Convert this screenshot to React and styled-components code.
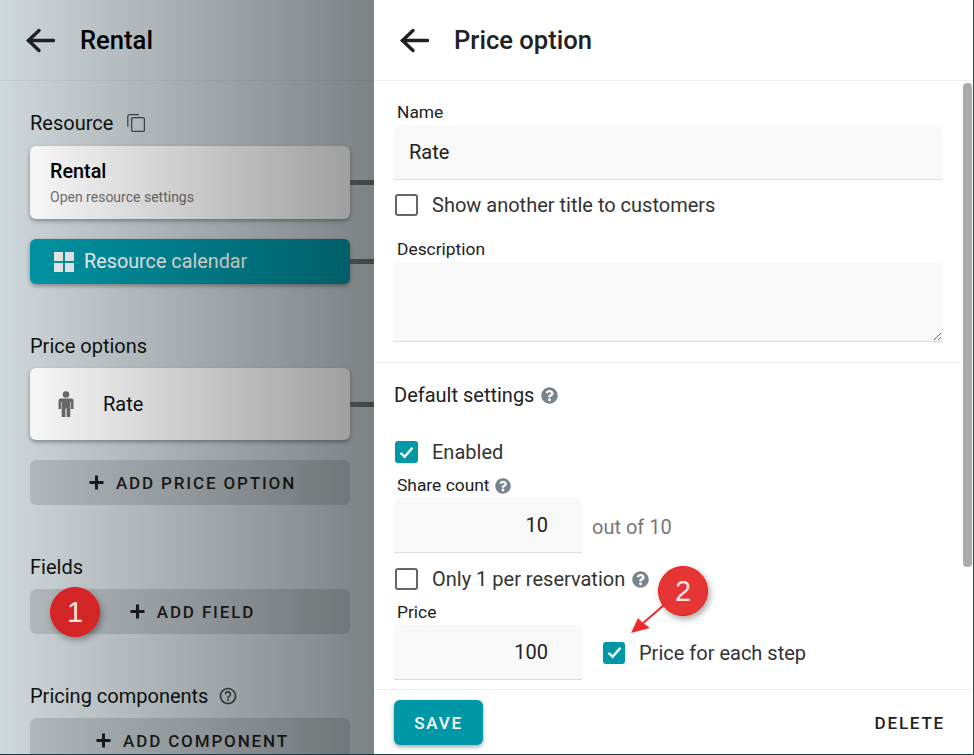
import React from 'react';
import styled, { createGlobalStyle } from 'styled-components';
import { FaQuestionCircle } from 'react-icons/fa';
import { MdHelpOutline } from 'react-icons/md';

const Global = createGlobalStyle`
  html, body {
    margin: 0;
    padding: 0;
    height: 755px;
    overflow: hidden;
    background: #fff;
    font-family: Roboto, "Liberation Sans", sans-serif;
  }
  * { box-sizing: border-box; }
`;

const Frame = styled.div`
  display: flex;
  width: 974px;
  height: 755px;
  position: relative;
  overflow: hidden;
  border-right: 1px solid #37474a;
  border-bottom: 1px solid #1f3a3d;
`;

/* ---------- left panel ---------- */

const LeftPanel = styled.div`
  position: relative;
  width: 374px;
  flex: none;
  height: 100%;
  overflow: hidden;
  background: #cfd8dc;
  color: #000;
`;

const Shade = styled.div`
  position: absolute;
  inset: 0;
  pointer-events: none;
  background: linear-gradient(to right, rgba(0, 0, 0, 0) 0%, rgba(0, 0, 0, 0.4) 100%);
`;

const Header = styled.div`
  display: flex;
  align-items: center;
  height: 81px;
  flex: none;
  padding-left: ${(p) => p.$pad}px;
  border-bottom: 1px solid ${(p) => p.$line};
`;

const BackIcon = styled.svg`
  width: 29px;
  height: 25px;
  flex: none;
  margin-right: ${(p) => p.$gap}px;
`;

const Title = styled.div`
  font-size: 25.6px;
  font-weight: ${(p) => p.$weight};
  color: ${(p) => p.$color};
  line-height: 28px;
`;

const LeftBody = styled.div`
  padding: 30px 24px 0 30px;
`;

const SectionLabel = styled.div`
  display: flex;
  align-items: center;
  gap: ${(p) => p.$gap || 10}px;
  height: 24px;
  font-size: 20px;
  line-height: 24px;
  margin-bottom: ${(p) => p.$after || 10}px;
  color: #111;
`;

const Group = styled.div`
  margin-bottom: ${(p) => p.$after}px;
`;

const Card = styled.div`
  position: relative;
  width: 320px;
  height: ${(p) => p.$h}px;
  border-radius: 6px;
  background: #fff;
  box-shadow: 0 2px 4px rgba(0, 0, 0, 0.35);
  margin-bottom: 20px;
  display: flex;
  flex-direction: ${(p) => (p.$row ? 'row' : 'column')};
  align-items: ${(p) => (p.$row ? 'center' : 'flex-start')};
  justify-content: ${(p) => (p.$row ? 'flex-start' : 'center')};
  padding-left: 20px;
`;

const Connector = styled.span`
  position: absolute;
  left: 100%;
  top: ${(p) => p.$top}px;
  width: 30px;
  height: 5px;
  background: #6f7375;
`;

const CardTitle = styled.div`
  font-size: 19.8px;
  font-weight: 500;
  line-height: 24px;
  margin-top: 1px;
`;

const CardSub = styled.div`
  font-size: 14px;
  color: #757575;
  line-height: 20px;
  margin-top: 3px;
`;

const CalendarButton = styled(Card)`
  background: #0097a7;
  color: #fff;
  padding-left: 24px;
  gap: 10px;
  font-size: 19.8px;
  margin-bottom: 0;
`;

const RateText = styled.div`
  font-size: 20px;
  color: #111;
  margin-left: 29px;
`;

const PersonIcon = styled.svg`
  width: 16px;
  height: 26px;
  flex: none;
  margin-left: 8px;
`;

const AddButton = styled.div`
  width: 320px;
  height: 45px;
  border-radius: 6px;
  background: rgba(0, 0, 0, 0.12);
  display: flex;
  align-items: center;
  justify-content: center;
  gap: 12px;
  padding-left: 5px;
  font-size: 17px;
  font-weight: 500;
  letter-spacing: 1.85px;
  color: #1d1d1d;
`;

const PlusIcon = styled.svg`
  width: 15px;
  height: 15px;
  flex: none;
`;

const Marker = styled.div`
  position: absolute;
  left: ${(p) => p.$x}px;
  top: ${(p) => p.$y}px;
  width: 50px;
  height: 50px;
  border-radius: 50%;
  background: ${(p) => p.$bg};
  border: 1.5px solid #f01a1a;
  box-shadow: 2px 3px 6px rgba(0, 0, 0, 0.35);
  color: #fbe4e4;
  font-family: "Liberation Sans", Arial, sans-serif;
  font-size: 29px;
  display: flex;
  align-items: center;
  justify-content: center;
  z-index: 3;
`;

/* ---------- right panel ---------- */

const RightPanel = styled.div`
  flex: 1;
  min-width: 0;
  height: 100%;
  display: flex;
  flex-direction: column;
  background: #fff;
  color: #212121;
`;

const Scroller = styled.div`
  position: relative;
  flex: 1;
  min-height: 0;
  overflow: hidden;
  border-bottom: 1px solid #eee;
`;

const Thumb = styled.div`
  position: absolute;
  top: 2px;
  right: 1px;
  width: 9px;
  height: 484px;
  border-radius: 4px;
  background: #ababab;
`;

const Section = styled.div`
  padding: ${(p) => p.$pad};
  border-bottom: ${(p) => (p.$line ? '1px solid #eee' : 'none')};
  margin-right: 11px;
`;

const FieldLabel = styled.div`
  display: flex;
  align-items: center;
  gap: 5px;
  font-size: 17.4px;
  line-height: 19px;
  height: 19px;
  padding-left: 3px;
  margin-bottom: 3px;
  color: #212121;
`;

const FieldInput = styled.input`
  display: block;
  width: ${(p) => p.$w}px;
  height: 55px;
  border: 0;
  border-bottom: 1px solid #ddd;
  border-radius: 6px 6px 0 0;
  background: #f9f9f9;
  font: 20px Roboto, sans-serif;
  color: #212121;
  outline: none;
  padding: ${(p) => (p.$right ? '0 34px 0 0' : '0 15px')};
  text-align: ${(p) => (p.$right ? 'right' : 'left')};
`;

const FieldArea = styled.textarea`
  display: block;
  width: 548px;
  height: 80px;
  border: 0;
  border-bottom: 1px solid #ddd;
  border-radius: 6px 6px 0 0;
  background: #f9f9f9;
  outline: none;
  margin: 0;
`;

const CheckRow = styled.div`
  display: flex;
  align-items: center;
  gap: 14px;
  font-size: 20px;
  line-height: 24px;
  color: #333;
  margin: ${(p) => p.$margin};
`;

const Box = styled.span`
  width: ${(p) => p.$w || 23}px;
  height: 22px;
  flex: none;
  border-radius: 3px;
  display: flex;
  align-items: center;
  justify-content: center;
  background: ${(p) => (p.$on ? '#0097a7' : '#fff')};
  border: ${(p) => (p.$on ? '0' : '2px solid #666')};
`;

const Heading = styled.div`
  display: flex;
  align-items: center;
  gap: 7px;
  font-size: 20px;
  line-height: 24px;
  color: #212121;
`;

const InputRow = styled.div`
  display: flex;
  align-items: center;
`;

const Suffix = styled.div`
  font-size: 20px;
  color: #777;
  margin-left: 10px;
  margin-top: 3px;
`;

const HelpIcon = styled(FaQuestionCircle)`
  color: #78848c;
  flex: none;
  margin-left: ${(p) => p.$shift || 0}px;
`;

const Footer = styled.div`
  height: 64px;
  flex: none;
  display: flex;
  align-items: flex-start;
  justify-content: space-between;
  padding: 10px 28px 0 20px;
`;

const SaveButton = styled.div`
  width: 89px;
  height: 45px;
  border-radius: 6px;
  background: #0097a7;
  box-shadow: 0 2px 4px rgba(0, 0, 0, 0.35);
  color: #fff;
  font-size: 17px;
  font-weight: 500;
  letter-spacing: 1.8px;
  display: flex;
  align-items: center;
  justify-content: center;
`;

const DeleteButton = styled.div`
  height: 45px;
  display: flex;
  align-items: center;
  font-size: 17px;
  font-weight: 500;
  letter-spacing: 1.8px;
  color: #212121;
`;

const ArrowOverlay = styled.svg`
  position: absolute;
  left: 598px;
  top: 600px;
  width: 70px;
  height: 40px;
  z-index: 2;
`;

const Back = ({ gap, color }) => (
  <BackIcon $gap={gap} viewBox="0 0 29 25" fill="none" stroke={color} strokeWidth="3.4" strokeLinecap="round">
    <path d="M2.5 12.5H27.5" />
    <path d="M13 2.5L2.5 12.5L13 22.5" />
  </BackIcon>
);

const Plus = () => (
  <PlusIcon viewBox="0 0 15 15" fill="#1d1d1d">
    <path d="M6 0.5h3V6h5.5v3H9v5.5H6V9H0.5V6H6z" />
  </PlusIcon>
);

const Check = () => (
  <svg width="15" height="13" viewBox="0 0 15 13" fill="none" stroke="#fff" strokeWidth="2.4">
    <path d="M1.5 6.8L5.6 10.8L13.5 1.8" />
  </svg>
);

const Tiles = () => (
  <svg width="20" height="20" viewBox="0 0 20 20" fill="#f2f2f2">
    <rect x="0" y="0" width="9" height="9" />
    <rect x="11" y="0" width="9" height="9" />
    <rect x="0" y="11" width="9" height="9" />
    <rect x="11" y="11" width="9" height="9" />
  </svg>
);

const CopyIcon = () => (
  <svg width="18" height="18" viewBox="0 0 18 18" fill="none" stroke="#4a4a4a" strokeWidth="1.3">
    <rect x="4.6" y="3.6" width="12.8" height="13.8" rx="1.5" />
    <path d="M0.8 12.5V2.2a1.5 1.5 0 0 1 1.5-1.5H12" />
  </svg>
);

const App = () => (
  <>
    <Global />
    <Frame>
      <LeftPanel>
        <Header $pad={26} $line="#c3ccd0">
          <Back gap={25} color="#212121" />
          <Title $weight={500} $color="#000">Rental</Title>
        </Header>
        <LeftBody>
          <SectionLabel $gap={14} $after={11}>Resource <CopyIcon /></SectionLabel>
          <Group $after={50}>
            <Card $h={73}>
              <CardTitle>Rental</CardTitle>
              <CardSub>Open resource settings</CardSub>
              <Connector $top={34} />
            </Card>
            <CalendarButton $row $h={45}>
              <Tiles />
              Resource calendar
              <Connector $top={20} />
            </CalendarButton>
          </Group>

          <SectionLabel>Price options</SectionLabel>
          <Group $after={50}>
            <Card $row $h={72}>
              <PersonIcon viewBox="0 0 16 26" fill="#6e6e6e">
                <circle cx="8" cy="3.5" r="3.3" />
                <path d="M2.5 7.5h11a2 2 0 0 1 2 2V18h-2.6v-7h-.6v15H8.6v-8.5H7.4V26H3.7V11h-.6v7H.5V9.5a2 2 0 0 1 2-2z" />
              </PersonIcon>
              <RateText>Rate</RateText>
              <Connector $top={34} />
            </Card>
            <AddButton><Plus />ADD PRICE OPTION</AddButton>
          </Group>

          <SectionLabel>Fields</SectionLabel>
          <Group $after={50}>
            <AddButton><Plus />ADD FIELD</AddButton>
          </Group>

          <SectionLabel>
            Pricing components
            <MdHelpOutline size={20} color="#444" />
          </SectionLabel>
          <AddButton><Plus />ADD COMPONENT</AddButton>
        </LeftBody>
        <Shade />
      </LeftPanel>

      <RightPanel>
        <Header $pad={26} $line="#f0f0f0">
          <Back gap={25} color="#212121" />
          <Title $weight={500} $color="#212121">Price option</Title>
        </Header>
        <Scroller>
          <Thumb />
          <Section $pad="22px 0 20px 20px" $line>
            <FieldLabel>Name</FieldLabel>
            <FieldInput $w={548} readOnly value="Rate" />
            <CheckRow $margin="13px 0 23px 1px"><Box />Show another title to customers</CheckRow>
            <FieldLabel>Description</FieldLabel>
            <FieldArea readOnly />
          </Section>
          <Section $pad="20px 0 0 20px">
            <Heading>Default settings <HelpIcon size={17} /></Heading>
            <CheckRow $margin="33px 0 12px 1px"><Box $on><Check /></Box>Enabled</CheckRow>
            <FieldLabel>Share count <HelpIcon size={16} /></FieldLabel>
            <InputRow>
              <FieldInput $w={188} $right readOnly value="10" />
              <Suffix>out of 10</Suffix>
            </InputRow>
            <CheckRow $margin="14px 0 12px 1px">
              <Box />Only 1 per reservation
              <HelpIcon size={17} $shift={-7} />
            </CheckRow>
            <FieldLabel>Price</FieldLabel>
            <InputRow>
              <FieldInput $w={188} $right readOnly value="100" />
              <CheckRow $margin="0 0 0 21px"><Box $on $w={22}><Check /></Box>Price for each step</CheckRow>
            </InputRow>
          </Section>
        </Scroller>
        <Footer>
          <SaveButton>SAVE</SaveButton>
          <DeleteButton>DELETE</DeleteButton>
        </Footer>
      </RightPanel>

      <Marker $x={50} $y={587} $bg="#d32426">1</Marker>
      <Marker $x={658} $y={566} $bg="#e53535">2</Marker>
      <ArrowOverlay viewBox="0 0 70 40">
        <path d="M44 24L66 5" stroke="#f02a2a" strokeWidth="2" fill="none" />
        <path d="M33 33L40 18L45 23L52 28Z" fill="#f02a2a" />
      </ArrowOverlay>
    </Frame>
  </>
);

export default App;
